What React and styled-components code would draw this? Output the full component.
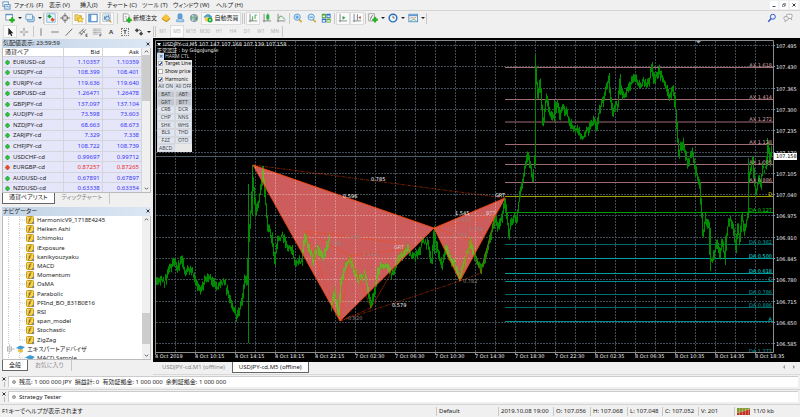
import React, { useState } from "react";
import styled, { createGlobalStyle, css } from "styled-components";

const GlobalStyle = createGlobalStyle`
  * {
    box-sizing: border-box;
  }

  body {
    margin: 0;
    background: #f0f0f0;
    color: #222;
    font-family: "Noto Sans", "Noto Sans CJK JP", sans-serif;
    font-size: 6px;
    line-height: 9px;
    font-feature-settings: "palt";
  }

  button,
  input {
    margin: 0;
    padding: 0;
    border: 0;
    background: none;
    color: inherit;
    font: inherit;
    font-feature-settings: inherit;
  }
`;

/* ---------- data ---------- */

const MENUS = [
  ["ファイル (F)", 35],
  ["表示 (V)", 31],
  ["挿入(I)", 27],
  ["チャート (C)", 35],
  ["ツール (T)", 31],
  ["ウィンドウ (W)", 43],
  ["ヘルプ (H)", 30],
];

const TIMEFRAMES = ["M1", "M5", "M15", "M30", "H1", "H4", "D1", "W1", "MN"];

const QUOTES = [
  ["EURUSD-cd", "1.10357", "1.10359"],
  ["USDJPY-cd", "108.399", "108.401"],
  ["EURJPY-cd", "119.636", "119.640"],
  ["GBPUSD-cd", "1.26471", "1.26478"],
  ["GBPJPY-cd", "137.097", "137.104"],
  ["AUDJPY-cd", "73.598", "73.603"],
  ["NZDJPY-cd", "68.663", "68.673"],
  ["ZARJPY-cd", "7.329", "7.338"],
  ["CHFJPY-cd", "108.722", "108.739"],
  ["USDCHF-cd", "0.99697", "0.99712"],
  ["EURGBP-cd", "0.87257", "0.87265", true],
  ["AUDUSD-cd", "0.67891", "0.67897"],
  ["NZDUSD-cd", "0.63338", "0.63354"],
];

const INDICATORS = [
  "HarmonicV9_1718E4245",
  "Heiken Ashi",
  "Ichimoku",
  "iExposure",
  "kanikyouzyaku",
  "MACD",
  "Momentum",
  "OsMA",
  "Parabolic",
  "PFInd_BO_831B0E16",
  "RSI",
  "span_model",
  "Stochastic",
  "ZigZag",
];

const PATTERNS = [
  "All ON", "All OFF",
  "BAT", "ABT",
  "GRT", "BTT",
  "CRB", "DCR",
  "CHP", "NNS",
  "SHK", "WHS",
  "BLS", "THD",
  "F2Z", "OTO",
  "ABCD",
];
const ACTIVE_PATTERNS = ["BAT", "ABT", "GRT", "BTT"];

const TIMES = [
  "4 Oct 2019", "4 Oct 10:15", "4 Oct 14:15", "4 Oct 18:15", "4 Oct 22:15",
  "7 Oct 02:30", "7 Oct 06:30", "7 Oct 10:30", "7 Oct 14:30", "7 Oct 18:30",
  "7 Oct 22:30", "8 Oct 02:35", "8 Oct 06:35", "8 Oct 10:35", "8 Oct 14:35",
  "8 Oct 18:35",
];

// y, label, line colour, text colour
const LEVELS = [
  [67.5, "AX 1.618", "#a06c74", "#dca4ac"],
  [99.5, "AX 1.414", "#a06c74", "#dca4ac"],
  [122, "AX 1.272", "#a06c74", "#dca4ac"],
  [144.5, "AX 1.128", "#a06c74", "#dca4ac"],
  [164.5, "AX 1.000", "#a06c74", "#dca4ac"],
  [182.5, "AX 0.886", "#a06c74", "#dca4ac"],
  [196.5, "D", "#a0a000", "#d8d800"],
  [212.5, "DA 0.127", "#009c00", "#00d800"],
  [244.5, "DA 0.382", "#006c6c", "#00a0a0"],
  [258.5, "DA 0.500", "#00a0a0", "#00e0e0"],
  [273.5, "DA 0.618", "#00a0a0", "#00e0e0"],
  [281.5, "C", "#008c8c", "#00d8d8"],
  [294.5, "DA 0.786", "#006c6c", "#00a0a0"],
  [307.5, "DA 0.886", "#006c6c", "#00a0a0"],
  [321.5, "A", "#008c8c", "#00d8d8"],
  [353.5, "DA 1.272", "#006c6c", "#00a0a0"],
];

// turning points of the price, one run per session
const RUNS = [
  [
    [155, 283], [160, 278], [164, 283], [170, 268], [175, 261], [178, 269],
    [182, 259], [185, 273], [190, 267], [195, 277], [200, 291], [205, 280],
    [211, 277], [217, 288], [225, 283], [230, 298], [237, 317], [242, 303],
    [245, 277], [247, 283], [249, 240], [251, 213], [253, 178], [256, 212],
    [259, 200], [261, 186], [263, 172], [265, 192], [268, 227], [272, 237],
    [275, 260], [278, 240], [283, 235], [287, 247], [292, 250], [295, 262],
    [302, 260], [305, 235], [309, 248], [313, 260], [318, 248], [323, 258],
    [330, 238],
  ],
  [
    [331, 307], [335, 293], [339, 316], [341, 283], [344, 270], [350, 259],
    [353, 267], [358, 280], [362, 276], [365, 275], [368, 290], [371, 304],
    [375, 292], [378, 272], [383, 265], [392, 273], [400, 258], [408, 248],
    [413, 258], [418, 254], [423, 242], [428, 245], [432, 262], [434, 232],
    [437, 247], [442, 267], [447, 247], [449, 257], [455, 265], [460, 279],
    [463, 267], [467, 255], [471, 243], [475, 257], [481, 270], [485, 260],
    [490, 240], [495, 218], [499, 229], [502, 218], [505, 200], [509, 233],
    [512, 220], [517, 217], [520, 193], [525, 170], [528, 153], [533, 178],
    [535, 160],
  ],
  [
    [536, 70], [538, 96], [540, 80], [541, 88], [543, 124], [547, 97],
    [550, 114], [554, 116], [557, 103], [560, 117], [563, 106], [568, 116],
    [572, 128], [578, 131], [582, 137], [588, 131], [593, 121], [597, 128],
    [600, 109], [604, 99], [607, 86], [609, 80], [611, 100], [613, 116],
    [616, 104], [618, 107], [620, 80], [624, 99], [628, 89], [635, 76],
    [640, 86], [643, 81], [646, 86], [650, 79], [652, 66], [654, 81],
    [659, 70], [663, 81], [667, 88], [670, 97], [673, 87], [676, 109],
    [679, 154], [683, 141], [688, 165], [692, 151], [696, 171], [700, 186],
    [702, 215], [703, 234], [706, 218], [709, 226], [710, 256], [713, 257],
    [717, 242], [720, 256], [722, 243], [725, 257], [727, 232], [730, 219],
    [733, 227], [736, 249], [738, 225], [740, 241], [742, 218], [745, 230],
    [748, 216], [749, 180], [753, 161], [755, 184], [756, 193], [759, 179],
    [761, 186], [763, 168], [766, 168], [768, 145], [770, 160], [772, 147],
  ],
];

const SPIKES = [
  "M248.5 184V343", "M252.5 165V215", "M262.5 166V186", "M535.5 55V165",
  "M609.5 73V92", "M620.5 74V95", "M652.5 62V74", "M710.5 228V271",
  "M725.5 236V265", "M748.5 158V218", "M753.5 157V178", "M767.5 138V166",
  "M554.5 100V122", "M434.5 228V254",
].join("");

const noise = (n) => {
  const v = Math.sin(n * 12.9898) * 43758.5453;
  return v - Math.floor(v);
};

const barsPath = RUNS.map((run) => {
  let d = "";
  for (let i = 1; i < run.length; i++) {
    const [x0, y0] = run[i - 1];
    const [x1, y1] = run[i];
    const step = (y1 - y0) / (x1 - x0);
    for (let x = x0; x < x1; x++) {
      const wobble = (noise(x + 400) - 0.5) * 5;
      const mid = y0 + step * (x - x0 + 0.5) + wobble;
      const half = Math.abs(step) / 2;
      const up = half + 0.5 + noise(x) * 4;
      const down = half + 0.5 + noise(x + 900) * 4;
      d += `M${x + 0.5} ${(mid - up).toFixed(1)}V${(mid + down).toFixed(1)}`;
    }
  }
  return d;
}).join("") + SPIKES;

const TRIANGLES = "M253 165L434 228L340 321ZM434 228L505 198L460 281Z";

/* ---------- toolbar icons ---------- */

const Plus = ({ x = 6, y = 6 }) => (
  <path
    d={`M${x + 2} ${y}v2h-2v2h2v2h2v-2h2v-2h-2v-2z`}
    fill="#1fc01f"
    stroke="#0a8a0a"
    strokeWidth=".5"
  />
);

const Axis = () => <path d="M2.5 1v10M1 9.5h10" stroke="#777" fill="none" />;

const ICONS = {
  newChart: (
    <>
      <rect x="1" y="1.5" width="8" height="7" fill="#fff" stroke="#6c8a9c" />
      <path d="M1 2h8" stroke="#4f94cd" strokeWidth="1.4" />
      <Plus x={5.5} y={5.5} />
    </>
  ),
  profiles: (
    <>
      <rect x="3" y="4" width="8" height="6.5" rx="1" fill="#b9d7ef" stroke="#5f92bd" />
      <rect x="1" y="1.5" width="8" height="6.5" rx="1" fill="#e4f0fa" stroke="#5f92bd" />
    </>
  ),
  watch: (
    <>
      <rect x="1" y="1" width="10" height="10" fill="#eaf4fc" stroke="#7ab0d8" />
      <path d="M4 1.500l3 3-3 2-2.500-2.500z" fill="#20a040" />
      <path d="M8 10.500L5.500 8l2-2.500 3 2.500z" fill="#e04a20" />
    </>
  ),
  target: (
    <g stroke="#666" fill="none">
      <circle cx="6" cy="6" r="3.300" />
      <path d="M6 0v5M6 7v5M0 6h5M7 6h5" />
    </g>
  ),
  favorites: (
    <>
      <path d="M1 2h4l1 1h3v6H1z" fill="#f4cf62" stroke="#b58a1c" strokeWidth=".6" />
      <path d="M7.500 4l1.200 2.400 2.800.3-2 1.800.6 2.800-2.600-1.400-2.500 1.400.6-2.800-2-1.800 2.700-.3z" fill="#ffe14a" stroke="#b58a1c" strokeWidth=".6" />
    </>
  ),
  navigator: (
    <>
      <rect x="1" y="1.500" width="10" height="9" fill="#fff" stroke="#3d7cc4" strokeWidth="1.200" />
      <rect x="1.500" y="2" width="2.500" height="8" fill="#5a9be0" />
    </>
  ),
  tester: (
    <>
      <rect x="1" y="1" width="9" height="9" fill="#dcebf7" stroke="#8ab" strokeWidth=".6" />
      <path d="M3 8V4M5 7V3M8 6V2" stroke="#579" />
      <circle cx="6.500" cy="6.500" r="2.300" fill="#cfe8ff" stroke="#47a" />
      <path d="M8.300 8.300l3 3" stroke="#d09a20" strokeWidth="1.500" />
    </>
  ),
  order: (
    <>
      <path d="M1.500 1h5l2 2v7h-7z" fill="#fff" stroke="#777" strokeWidth=".8" />
      <path d="M3 4h3M3 6h3" stroke="#999" strokeWidth=".8" />
      <Plus x={5.5} y={5.5} />
    </>
  ),
  editor: (
    <>
      <path d="M1 6l5-4.500L11 6v1.500L6.500 11 1 7.500z" fill="#c98d12" />
      <path d="M1 6l5-4.500L11 6 6.500 9.500z" fill="#f6c642" />
    </>
  ),
  signals: (
    <>
      <path d="M2 10.500V8l2-1.500h4L10.500 8v2.500z" fill="#a9cdea" stroke="#4a88c0" strokeWidth=".7" />
      <rect x="3.500" y="1" width="5" height="5.500" rx="1.500" fill="#5fa4dc" stroke="#3d76ab" strokeWidth=".6" />
    </>
  ),
  market: (
    <>
      <circle cx="6" cy="6" r="4.500" fill="#8fb0b4" stroke="#678" strokeWidth=".6" />
      <path d="M3 3.500l3 1-1 3-2-1zM7 6l3-1-1 4z" fill="#4c9a50" />
      <path d="M4 2.500q2 3 0 7" stroke="#e4eef0" fill="none" />
    </>
  ),
  auto: (
    <>
      <path d="M1 5q5-7 10 0l-5 1.500z" fill="#4aa3d8" stroke="#2f78aa" strokeWidth=".5" />
      <circle cx="5" cy="7.500" r="3" fill="#f2cd5a" />
      <circle cx="8.500" cy="8.500" r="3" fill="#18a838" />
      <path d="M7.700 7v3l2.300-1.500z" fill="#fff" />
    </>
  ),
  bars: (
    <>
      <Axis />
      <path d="M5.500 4v5M5 8.500h-1M8.500 2v5M9 2.500h1.500" stroke="#1f9a3a" />
    </>
  ),
  candles: (
    <>
      <Axis />
      <path d="M7 0.500v9" stroke="#1f9a3a" />
      <rect x="5.200" y="2" width="3.600" height="5.500" fill="#25b545" />
    </>
  ),
  line: (
    <>
      <Axis />
      <path d="M3 7q2-5 4-3t4 4" stroke="#3a9a4a" fill="none" />
    </>
  ),
  zoomIn: (
    <>
      <path d="M7 7.500l3.500 3.500" stroke="#d9a62a" strokeWidth="2" />
      <circle cx="5" cy="5" r="3.700" fill="#d8eefb" stroke="#3f8fd0" />
      <path d="M3 5h4M5 3v4" stroke="#2a78bd" />
    </>
  ),
  zoomOut: (
    <>
      <path d="M7 7.500l3.500 3.500" stroke="#d9a62a" strokeWidth="2" />
      <circle cx="5" cy="5" r="3.700" fill="#d8eefb" stroke="#3f8fd0" />
      <path d="M3 5h4" stroke="#2a78bd" />
    </>
  ),
  tiles: (
    <>
      <path d="M1 1h5v5H1zM6.500 6.500h5v5h-5z" fill="#4fa832" />
      <path d="M6.500 1h5v5h-5zM1 6.500h5v5H1z" fill="#2f6fd0" />
      <path d="M2 3h3v2H2zM7.500 3h3v2h-3zM2 8.500h3v2H2zM7.500 8.500h3v2h-3z" fill="#e8f2e4" />
    </>
  ),
  scroll: (
    <>
      <Axis />
      <path d="M5.500 3.500v4.500L9 5.700z" fill="#27a53f" />
    </>
  ),
  shift: (
    <>
      <Axis />
      <path d="M6.500 1.500v7" stroke="#456f9c" />
      <path d="M10.500 3.500v4L7.500 5.500z" fill="#c85a3c" />
    </>
  ),
  indicators: (
    <>
      <rect x="1" y="1" width="6.500" height="8.500" fill="#fff" stroke="#777" strokeWidth=".8" />
      <path d="M3 8q1-6 3-5" stroke="#555" fill="none" />
      <Plus x={5.5} y={5} />
    </>
  ),
  clock: (
    <>
      <circle cx="6" cy="6" r="4.600" fill="#eef6fd" stroke="#2a6cb8" strokeWidth="1.700" />
      <path d="M6 3.500V6h2" stroke="#333" fill="none" strokeWidth=".8" />
    </>
  ),
  template: (
    <>
      <rect x="1" y="1.500" width="10.500" height="9" fill="#eff6fb" stroke="#4a88c0" />
      <path d="M1 3h10.500" stroke="#5a9bd4" strokeWidth="1.500" />
      <path d="M2.500 6.500l2-1.200 2 1 3.500-1.300" stroke="#c46a3a" fill="none" strokeWidth=".8" />
      <path d="M2.500 8.800h2l2-1 3.500 1" stroke="#3a9a4a" fill="none" strokeWidth=".8" />
    </>
  ),
  cursor: <path d="M4 1v9l2-2 1.500 3 1.300-.7L7.400 7.500H10z" fill="#222" />,
  cross: <path d="M6 1v4M6 7v4M1 6h4M7 6h4" stroke="#777" />,
  vline: <path d="M6 1.500v9" stroke="#666" />,
  hline: <path d="M1.500 6h9" stroke="#666" />,
  trend: <path d="M2 10.500L10 2" stroke="#555" />,
  channel: (
    <>
      <path d="M1 8l6-6M3 10l6.500-7M2 6.500l3 2.500M5 4l3 3" stroke="#555" />
      <path d="M11.500 8.500H9.500v3h2M9.500 10h1.700" stroke="#333" fill="none" strokeWidth=".7" />
    </>
  ),
  fibo: (
    <>
      <path d="M1 2.500h10M1 4.500h10M1 6.500h10M1 8.500h7" stroke="#888" strokeDasharray="1 .4" />
      <path d="M11.500 8.500H9.500v3M9.500 10h1.500" stroke="#333" fill="none" strokeWidth=".7" />
    </>
  ),
  arrows: (
    <>
      <path d="M3.500 1.500L6 4 3.500 6.500 1 4z" fill="#444" />
      <path d="M8.500 5.500L11 8l-2.500 2.500L6 8z" fill="#444" />
      <path d="M6 3l3 2" stroke="#444" />
    </>
  ),
  search: (
    <>
      <circle cx="7" cy="4.500" r="3" fill="#e6edff" stroke="#3a5cc0" strokeWidth="1.200" />
      <path d="M5 6.500L1.500 10.500" stroke="#3a5cc0" strokeWidth="1.800" />
    </>
  ),
  chat: (
    <g fill="#f6f6f6" stroke="#888" strokeWidth=".8">
      <path d="M5 1.500h5.500q1.500 2.500-.5 4.500l.5 2-2-1.500H5q-2-2.500 0-5z" />
      <path d="M1.500 4.500h4q2 2 0 4H4L2.500 10.500v-2q-2.500-2-1-4z" />
    </g>
  ),
};

const IconSvg = styled.svg`
  display: block;
  flex: none;
  width: 10px;
  height: 10px;
`;

const Icon = ({ name }) => (
  <IconSvg viewBox="0 0 12 12" aria-hidden="true">
    {ICONS[name]}
  </IconSvg>
);

/* ---------- frame ---------- */

const Window = styled.div`
  display: flex;
  flex-direction: column;
  height: 100vh;
  overflow: hidden;
`;

const MenuBar = styled.nav`
  display: flex;
  align-items: center;
  flex: none;
  height: 11px;
  padding-left: 2px;
  border-bottom: 1px solid #d4d4d4;
`;

const AppIcon = styled.svg`
  width: 9px;
  height: 9px;
  margin-right: 3px;
`;

const MenuItem = styled.button`
  width: ${(p) => p.$width}px;
  text-align: left;
  white-space: nowrap;
`;

const Spacer = styled.div`
  flex: 1;
`;

const WindowButton = styled.button`
  display: grid;
  place-items: center;
  width: 8px;
  height: 8px;
  margin-right: 2px;
  background: #fff;

  svg {
    width: 4px;
    height: 4px;
  }
`;

const Toolbar = styled.div`
  display: flex;
  align-items: center;
  flex: none;
  height: ${(p) => p.$height}px;
  padding: 0 3px;
`;

const pressed = css`
  background: #fafafa;
  box-shadow: inset 0 0 0 1px #dcdcdc;
`;

const ToolButton = styled.button`
  display: flex;
  align-items: center;
  justify-content: center;
  flex: none;
  gap: 1px;
  width: ${(p) => p.$width || 14}px;
  height: 13px;
  color: ${(p) => (p.$muted ? "#b4b4b4" : "#222")};
  font-size: ${(p) => (p.$muted ? 5 : 6)}px;
  white-space: nowrap;
  ${(p) => p.$pressed && pressed}
`;

const Caret = styled.span`
  margin-left: 2px;
  border: 2px solid transparent;
  border-top-color: #222;
  border-bottom: 0;
`;

const Separator = styled.i`
  flex: none;
  width: 1px;
  height: 11px;
  margin: 0 ${(p) => p.$end || 0}px 0 ${(p) => p.$start || 0}px;
  background: #c8c8c8;
`;

const Letter = styled.b`
  width: 8px;
  height: 8px;
  border: ${(p) => (p.$boxed ? "1px dotted #777" : "0")};
  color: #444;
  font-size: 6px;
  line-height: ${(p) => (p.$boxed ? 6 : 8)}px;
`;

const Main = styled.main`
  display: flex;
  flex: 1;
  min-height: 0;
`;

/* ---------- left panels ---------- */

const Sidebar = styled.aside`
  display: flex;
  flex-direction: column;
  flex: none;
  gap: 3px;
  width: 153px;
  padding: 1px 2px 4px;
`;

const Panel = styled.section`
  display: flex;
  flex-direction: column;
  flex: 1 1 0;
  min-height: 0;
`;

const PanelTitle = styled.h2`
  display: flex;
  align-items: center;
  justify-content: space-between;
  flex: none;
  height: 9px;
  margin: 0;
  padding: 0 1px;
  background: linear-gradient(90deg, #c2d3e6, #dce7f3);
  font-size: 6px;
  font-weight: 400;
  white-space: nowrap;
`;

const CloseButton = styled.button`
  display: grid;
  place-items: center;
  width: 5px;
  height: 5px;

  svg {
    width: 4px;
    height: 4px;
  }
`;

const PanelBody = styled.div`
  display: flex;
  flex: 1;
  min-height: 0;
  overflow: hidden;
  border: 1px solid #bbb;
  border-top: 0;
  background: #fff;
`;

const QuoteTable = styled.table`
  flex: 1;
  height: 146px;
  border-collapse: collapse;
  table-layout: fixed;

  th,
  td {
    padding: 0 2px 0 0;
    border-right: 1px solid #d4d4dc;
    border-bottom: 1px solid #d4d4dc;
    line-height: 8px;
    text-align: right;
    white-space: nowrap;
  }

  th {
    font-weight: 400;
  }

  th:first-child {
    width: 60px;
    padding-left: 2px;
    text-align: left;
  }
`;

const QuoteRow = styled.tr`
  background: #e6e6fa;
  color: ${(p) => (p.$down ? "#f02828" : "#3535f5")};

  th {
    color: #222;
  }
`;

const Diamond = styled.svg`
  width: 5px;
  height: 5px;
  margin-right: 3px;
  vertical-align: -1px;
`;

const Scrollbar = styled.div`
  display: flex;
  flex-direction: column;
  align-items: center;
  justify-content: space-between;
  flex: none;
  width: 8px;
  padding: 1px 0;
  background: #f0f0f0;

  svg {
    width: 5px;
    height: 5px;
  }
`;

const Track = styled.div`
  display: flex;
  flex: 1;
  align-items: ${(p) => (p.$end ? "flex-end" : "flex-start")};
  align-self: stretch;
  padding: ${(p) => (p.$end ? "0 0 9px" : "1px 0 0")};
`;

const Thumb = styled.div`
  flex: 1;
  height: ${(p) => p.$size}px;
  background: #cdcdcd;
`;

const TabStrip = styled.div`
  display: flex;
  flex: none;
  height: 11px;
`;

const Tab = styled.button`
  padding: 0 6px;
  border: 1px solid ${(p) => (p.$active ? "#666" : "transparent")};
  border-top: 0;
  background: ${(p) => (p.$active ? "#fff" : "none")};
  color: ${(p) => (p.$active ? "#222" : "#888")};
  line-height: 9px;
  white-space: nowrap;
`;

const Tree = styled.ul`
  display: grid;
  grid-template-rows: repeat(16, minmax(0, 1fr));
  flex: 1;
  height: 147px;
  margin: 0;
  padding: 0;
  list-style: none;
`;

const TreeItem = styled.li`
  display: flex;
  align-items: center;
  gap: 2px;
  line-height: 8px;
  white-space: nowrap;

  svg {
    flex: none;
    height: 10px;
  }
`;

/* ---------- chart ---------- */

const Workspace = styled.div`
  display: flex;
  flex-direction: column;
  flex: 1;
  min-width: 0;
`;

const ChartArea = styled.div`
  position: relative;
  flex: 1;
  min-height: 0;
  background: #000;
`;

const ChartSvg = styled.svg`
  display: block;
  width: 100%;
  height: 100%;
  font-family: "DejaVu Sans", "Noto Sans CJK JP", sans-serif;
  font-size: 5px;
`;

const HarmonicPanel = styled.form`
  position: absolute;
  top: 15px;
  left: 4px;
  display: flex;
  flex-direction: column;
  width: 35px;
  height: 99px;
  font-size: 5px;
  line-height: 7px;
  white-space: nowrap;
`;

const HarmonicTitle = styled.div`
  display: flex;
  align-items: center;
  gap: 1px;
  height: 7px;
  color: #c8ccd4;

  button {
    width: 7px;
    height: 7px;
    background: #cfe0f4;
    color: #234;
    line-height: 7px;
  }
`;

const HarmonicGrid = styled.div`
  display: grid;
  flex: 1;
  grid-template-columns: 1fr 1fr;
  grid-auto-rows: 1fr;
  background: #e8e8e8;
`;

const CheckLabel = styled.label`
  display: flex;
  align-items: center;
  grid-column: 1 / -1;
  gap: 2px;
  padding-left: 1px;
  overflow: hidden;
  color: #111;
  line-height: 7px;
`;

const Check = styled.input`
  flex: none;
  width: 5px;
  height: 5px;
  border: 1px solid #b4b4b4;
  background: ${(p) =>
    p.checked
      ? "linear-gradient(135deg, #fff 35%, #3a5cb0 35% 70%, #fff 70%)"
      : "#fff"};
  appearance: none;
`;

const PatternButton = styled.button`
  overflow: hidden;
  border: 1px solid #d4d8de;
  background: ${(p) => (p.$on ? "#c0c5ce" : "#dfe6f0")};
  color: #444;
  line-height: 5px;
`;

const ChartTabs = styled.div`
  display: flex;
  flex: none;
  align-items: flex-start;
  height: 13px;
  padding: 0 4px 0 2px;
  border-bottom: 1px solid #d8d8d8;

  svg {
    width: 4px;
    height: 4px;
    margin: 3px 0 0 6px;
  }

  ${Tab} {
    height: 11px;
  }
`;

/* ---------- bottom ---------- */

const Dock = styled.section`
  display: flex;
  flex: none;
  gap: 2px;
  height: 15px;
  padding: 1px 2px 2px;
  border-bottom: 1px solid #d4d4d4;
`;

const DockGrip = styled.div`
  display: flex;
  flex-direction: column;
  align-items: center;
  justify-content: space-between;
  width: 4px;
`;

const Dots = styled.i`
  width: 1px;
  height: 5px;
  background: #bbb;
`;

const DockBody = styled.div`
  display: flex;
  flex: 1;
  align-items: center;
  gap: 3px;
  padding-left: 3px;
  border: 1px solid #ccc;
  border-right: 0;
  border-bottom: 0;
  background: #fff;
  white-space: pre;

  svg {
    width: 4px;
    height: 4px;
  }
`;

const StatusBar = styled.footer`
  display: flex;
  align-items: center;
  flex: none;
  height: 12px;
  white-space: nowrap;
`;

const StatusCell = styled.div`
  display: flex;
  align-items: center;
  flex: ${(p) => (p.$width ? "none" : 1)};
  gap: 3px;
  width: ${(p) => p.$width}px;
  padding-left: ${(p) => (p.$width ? 2 : 1)}px;
  border-left: 1px solid ${(p) => (p.$width ? "#c8c8c8" : "transparent")};

  svg {
    width: 13px;
    height: 7px;
  }
`;

const Cross = () => (
  <svg viewBox="0 0 4 4" aria-hidden="true">
    <path d="M.5 .5l3 3M3.500 .5l-3 3" stroke="#222" strokeWidth=".9" />
  </svg>
);

const Chevron = ({ down }) => (
  <svg viewBox="0 0 6 6" aria-hidden="true">
    <path d={down ? "M1 2l2 2 2-2" : "M1 4l2-2 2 2"} fill="none" stroke="#444" />
  </svg>
);

const Tool = ({ icon, label, drop, ...rest }) => (
  <ToolButton type="button" aria-label={label || icon} $width={drop ? 20 : 14} {...rest}>
    <Icon name={icon} />
    {drop && <Caret />}
  </ToolButton>
);

function Toolbars() {
  return (
    <>
      <Toolbar $height={14}>
        <Tool icon="newChart" drop />
        <Tool icon="profiles" drop />
        <Separator />
        <Tool icon="watch" $pressed />
        <Tool icon="target" />
        <Tool icon="favorites" $pressed />
        <Tool icon="navigator" $pressed />
        <Tool icon="tester" $pressed />
        <Separator $start={3} $end={2} />
        <ToolButton type="button" $width={39}>
          <Icon name="order" />
          新規注文
        </ToolButton>
        <Tool icon="editor" />
        <Tool icon="signals" />
        <Tool icon="market" />
        <ToolButton type="button" $width={40} $pressed>
          <Icon name="auto" />
          自動売買
        </ToolButton>
        <Separator $start={1} $end={1} />
        <Separator $end={1} />
        <Tool icon="bars" $pressed />
        <Tool icon="candles" />
        <Tool icon="line" />
        <Separator $start={1} $end={1} />
        <Tool icon="zoomIn" />
        <Tool icon="zoomOut" />
        <Tool icon="tiles" />
        <Separator $start={1} $end={1} />
        <Tool icon="scroll" $pressed />
        <Tool icon="shift" $pressed />
        <Separator $start={1} />
        <Tool icon="indicators" drop />
        <Tool icon="clock" drop />
        <Tool icon="template" drop />
        <Separator />
        <Spacer />
        <Tool icon="search" />
        <Tool icon="chat" $width={18} />
      </Toolbar>
      <Toolbar $height={13}>
        <Tool icon="cursor" $pressed />
        <Tool icon="cross" />
        <Separator $start={2} />
        <Tool icon="vline" />
        <Tool icon="hline" />
        <Tool icon="trend" />
        <Tool icon="channel" />
        <Tool icon="fibo" />
        <ToolButton type="button">
          <Letter>A</Letter>
        </ToolButton>
        <ToolButton type="button">
          <Letter $boxed>T</Letter>
        </ToolButton>
        <Tool icon="arrows" drop />
        <Separator $start={1} $end={1} />
        <Separator />
        {TIMEFRAMES.map((tf) => (
          <ToolButton key={tf} type="button" $muted $pressed={tf === "M5"}>
            {tf}
          </ToolButton>
        ))}
        <Separator />
      </Toolbar>
    </>
  );
}

function MarketWatch() {
  return (
    <Panel>
      <PanelTitle>
        気配値表示: 23:59:59
        <CloseButton type="button" aria-label="close">
          <Cross />
        </CloseButton>
      </PanelTitle>
      <PanelBody>
        <QuoteTable>
          <thead>
            <tr>
              <th>通貨ペア</th>
              <th>Bid</th>
              <th>Ask</th>
            </tr>
          </thead>
          <tbody>
            {QUOTES.map(([symbol, bid, ask, down]) => (
              <QuoteRow key={symbol} $down={down}>
                <th scope="row">
                  <Diamond viewBox="0 0 6 6">
                    <path
                      d="M3 0l3 3-3 3-3-3z"
                      fill={down ? "#f05020" : "#28c838"}
                      stroke={down ? "#a02000" : "#087018"}
                      strokeWidth=".6"
                    />
                  </Diamond>
                  {symbol}
                </th>
                <td>{bid}</td>
                <td>{ask}</td>
              </QuoteRow>
            ))}
          </tbody>
        </QuoteTable>
        <Scrollbar>
          <Chevron />
          <Track>
            <Thumb $size={46} />
          </Track>
          <Chevron down />
        </Scrollbar>
      </PanelBody>
      <TabStrip>
        <Tab type="button" $active>通貨ペアリスト</Tab>
        <Tab type="button">ティックチャート</Tab>
        <Separator />
      </TabStrip>
    </Panel>
  );
}

function Navigator() {
  return (
    <Panel>
      <PanelTitle>
        ナビゲーター
        <CloseButton type="button" aria-label="close">
          <Cross />
        </CloseButton>
      </PanelTitle>
      <PanelBody>
        <Tree>
          {INDICATORS.map((name, i) => (
            <TreeItem key={name}>
              <svg width="32" viewBox="0 0 32 10">
                <path
                  d={`M5.500 0v10M16.500 0v${i === 13 ? 5 : 10}M17 5h6`}
                  stroke="#ccc"
                  strokeDasharray="1 1"
                />
                <rect x="23.500" y="1.500" width="7" height="7" rx="1" fill="#f6d554" stroke="#c49a20" />
                <path d="M28.500 3q-2-1-2 2t-1.500 2.500M25.500 5h2.500" stroke="#7a5c10" fill="none" strokeWidth=".8" />
                <circle cx="30" cy="8" r="1.300" fill="#888" />
              </svg>
              {name}
            </TreeItem>
          ))}
          <TreeItem>
            <svg width="22" viewBox="0 0 22 10">
              <path d="M6.500 0v10M8 5h4" stroke="#ccc" />
              <rect x="4.500" y="3" width="4" height="4" fill="#fff" stroke="#999" strokeWidth=".7" />
              <path d="M5.500 5h2" stroke="#555" strokeWidth=".7" />
              <path d="M13 4l4-2.500L22 3l-4 3z" fill="#3f9bd4" />
              <path d="M15 5.500h5v2l-2 1.500-3-1.500z" fill="#e8c040" />
            </svg>
            エキスパートアドバイザ
          </TreeItem>
          <TreeItem>
            <svg width="32" viewBox="0 0 32 10">
              <path d="M5.500 0v10M16.500 0v10M17 5h6" stroke="#ccc" strokeDasharray="1 1" />
              <path d="M22 4.500l5-2.500 5 2-4 3z" fill="#3f9bd4" />
              <path d="M24.500 6h5v2l-2 1.500-3-1.500z" fill="#e8c040" />
            </svg>
            MACD Sample
          </TreeItem>
        </Tree>
        <Scrollbar>
          <Chevron />
          <Track $end>
            <Thumb $size={31} />
          </Track>
          <Chevron down />
        </Scrollbar>
      </PanelBody>
      <TabStrip>
        <Tab type="button" $active>全般</Tab>
        <Tab type="button">お気に入り</Tab>
        <Separator />
      </TabStrip>
    </Panel>
  );
}

const PRICE_STEP = 21.31;

function Chart() {
  const columns = Array.from({ length: 30 }, (_, i) => 175.5 + i * 20);
  const prices = Array.from({ length: 15 }, (_, i) => ({
    y: Math.round(45 + i * PRICE_STEP) + 0.5,
    label: (107.495 - i * 0.065).toFixed(3),
  }));
  const gridPath =
    columns.map((x) => `M${x} 41V352`).join("") +
    prices.map(({ y }) => `M156 ${y}H773`).join("");

  return (
    <ChartSvg viewBox="153 38 647 324" role="img" aria-label="USDJPY-cd,M5">
      <defs>
        <clipPath id="patterns">
          <path d={TRIANGLES} />
        </clipPath>
        <clipPath id="plot">
          <rect x="156" y="41" width="617" height="311" />
        </clipPath>
      </defs>

      <path d={gridPath} stroke="#424c56" strokeDasharray="2 1" />
      <path d="M156 156.500H773" stroke="#4c5a66" />

      <path d={TRIANGLES} fill="#cd5c5c" />
      <g clipPath="url(#patterns)">
        <path d={gridPath} stroke="#d8908c" strokeDasharray="2 1" />
      </g>

      <g clipPath="url(#plot)">
        {LEVELS.map(([y, name, line]) => (
          <path key={name} d={`M505 ${y}H773`} stroke={line} />
        ))}
        <path d={barsPath} stroke="#008c00" />
        {LEVELS.map(([y, name, , color]) => (
          <text key={name} x="772" y={y - 1} fill={color} textAnchor="end">
            {name}
          </text>
        ))}
      </g>
      <path d={barsPath} stroke="#72b02c" clipPath="url(#patterns)" />

      <g fill="none" stroke="#ff4500">
        <path d={TRIANGLES} strokeWidth=".8" />
        <path
          d="M305 231L350 256L405 249M305 231L401 243M305 231L340 321L350 256L371 308L405 249M434 228L471 240L481 273L495 215M460 281L471 240"
          strokeOpacity=".6"
          strokeWidth=".7"
        />
        <path
          d="M253 165L505 198M340 321L460 281L481 273M340 321L371 308M434 228L495 215"
          strokeDasharray="3 1 1 1"
          strokeOpacity=".6"
          strokeWidth=".8"
        />
      </g>

      <g fill="#fff">
        <text x="371" y="181">0.785</text>
        <text x="343" y="198">0.596</text>
        <text x="392" y="307">0.579</text>
        <text x="455" y="215">1.545</text>
        <text x="495" y="197">GRT</text>
      </g>
      <g fill="#d8c4c4">
        <text x="486" y="215">BTT</text>
        <text x="394" y="249">GRT</text>
      </g>
      <g fill="#8f8686">
        <text x="348" y="320">0.820</text>
        <text x="463" y="283">0.782</text>
        <text x="346" y="239">0.790</text>
        <text x="327" y="245">0.728</text>
        <text x="363" y="256">1.110</text>
        <text x="457" y="222">0.852</text>
        <text x="469" y="231">1.764</text>
        <text x="453" y="237">0.702</text>
      </g>

      <path d="M155.500 352V40.500H773.500V352.500H155.500" fill="none" stroke="#8c8c8c" />
      <path d="M696 41h5l-2.500 2.500z" fill="#8fa4b8" />
      <path d="M157 43h4l-2 3z" fill="#fff" />
      <g fill="#f0f0f0">
        <text x="163" y="46">USDJPY-cd,M5 107.147 107.168 107.139 107.158</text>
        <text x="157" y="52">正常認証 : by GogoJungle</text>
        {prices.map(({ y, label }) => (
          <text key={label} x="776" y={y + 2}>
            {label}
          </text>
        ))}
        {TIMES.map((time, i) => (
          <text key={time} x={155 + i * 40} y="358">
            {time}
          </text>
        ))}
      </g>
      <path
        d={TIMES.map((_, i) => `M${155.5 + i * 40} 352v3`).join("") +
          prices.map(({ y }) => `M773 ${y}h2`).join("")}
        stroke="#8c8c8c"
      />
      <rect x="774" y="153" width="23" height="7" fill="#fff" />
      <text x="776" y="158" fill="#000">107.158</text>
    </ChartSvg>
  );
}

function HarmonicControl() {
  const [options, setOptions] = useState({
    "Target Line": true,
    "Show price": false,
    Harmonic: true,
  });

  return (
    <HarmonicPanel onSubmit={(e) => e.preventDefault()}>
      <HarmonicTitle>
        <button type="button" aria-label="close">✕</button>
        HARM CTL
      </HarmonicTitle>
      <HarmonicGrid>
        {Object.entries(options).map(([name, on]) => (
          <CheckLabel key={name}>
            <Check
              type="checkbox"
              checked={on}
              onChange={() => setOptions({ ...options, [name]: !on })}
            />
            {name}
          </CheckLabel>
        ))}
        {PATTERNS.map((name) => (
          <PatternButton key={name} type="button" $on={ACTIVE_PATTERNS.includes(name)}>
            {name}
          </PatternButton>
        ))}
      </HarmonicGrid>
    </HarmonicPanel>
  );
}

const DockPane = ({ children }) => (
  <Dock>
    <DockGrip>
      <CloseButton type="button" aria-label="close">
        <Cross />
      </CloseButton>
      <Dots />
    </DockGrip>
    <DockBody>
      <svg viewBox="0 0 4 4" aria-hidden="true">
        <circle cx="2" cy="2" r="1.500" fill="#bbb" stroke="#888" strokeWidth=".8" />
      </svg>
      {children}
    </DockBody>
  </Dock>
);

export default function App() {
  return (
    <Window>
      <GlobalStyle />
      <MenuBar>
        <AppIcon viewBox="0 0 10 10" aria-hidden="true">
          <rect x="1" y="1" width="6" height="5" fill="#fff" stroke="#5b8fc0" />
          <rect x="3" y="4" width="6" height="5" fill="#e3eefa" stroke="#5b8fc0" />
          <path d="M4 7l1.500-1.500L7 7l1.500-1.500" stroke="#3a6fa8" fill="none" strokeWidth=".7" />
        </AppIcon>
        {MENUS.map(([name, width]) => (
          <MenuItem key={name} type="button" $width={width}>
            {name}
          </MenuItem>
        ))}
        <Spacer />
        <WindowButton type="button" aria-label="minimize">
          <svg viewBox="0 0 4 4">
            <path d="M.5 3.500h3" stroke="#456" />
          </svg>
        </WindowButton>
        <WindowButton type="button" aria-label="restore">
          <svg viewBox="0 0 4 4">
            <path d="M1.500 1.500v-1h2v2h-1M.5 1.500h2v2h-2z" stroke="#456" fill="none" strokeWidth=".6" />
          </svg>
        </WindowButton>
        <WindowButton type="button" aria-label="close">
          <Cross />
        </WindowButton>
      </MenuBar>

      <Toolbars />

      <Main>
        <Sidebar>
          <MarketWatch />
          <Navigator />
        </Sidebar>
        <Workspace>
          <ChartArea>
            <Chart />
            <HarmonicControl />
          </ChartArea>
          <ChartTabs>
            <Tab type="button">USDJPY-cd,M1 (offline)</Tab>
            <Tab type="button" $active>USDJPY-cd,M5 (offline)</Tab>
            <Spacer />
            <svg viewBox="0 0 4 4">
              <path d="M3 0v4L1 2z" fill="#999" />
            </svg>
            <svg viewBox="0 0 4 4">
              <path d="M1 0v4l2-2z" fill="#999" />
            </svg>
          </ChartTabs>
        </Workspace>
      </Main>

      <DockPane>
        {"残高: 1 000 000 JPY  損益計: 0  有効証拠金: 1 000 000  余剰証拠金: 1 000 000"}
      </DockPane>
      <DockPane>Strategy Tester</DockPane>

      <StatusBar>
        <StatusCell>F1キーでヘルプが表示されます</StatusCell>
        <StatusCell $width={62}>Default</StatusCell>
        <StatusCell $width={55}>2019.10.08 19:00</StatusCell>
        <StatusCell $width={37}>O: 107.056</StatusCell>
        <StatusCell $width={37}>H: 107.068</StatusCell>
        <StatusCell $width={35}>L: 107.048</StatusCell>
        <StatusCell $width={36}>C: 107.052</StatusCell>
        <StatusCell $width={36}>V: 201</StatusCell>
        <StatusCell $width={66}>
          <svg viewBox="0 0 13 7" aria-hidden="true">
            <rect width="13" height="7" fill="#7f9a2c" />
            <path d="M0 7V5l13-4v6z" fill="#c03028" />
            <path d="M0 5l13-4M2.500 0v7M5.500 0v7M8.500 0v7M11.500 0v7" stroke="#e6d8a8" strokeWidth=".4" />
          </svg>
          11/0 kb
        </StatusCell>
      </StatusBar>
    </Window>
  );
}
